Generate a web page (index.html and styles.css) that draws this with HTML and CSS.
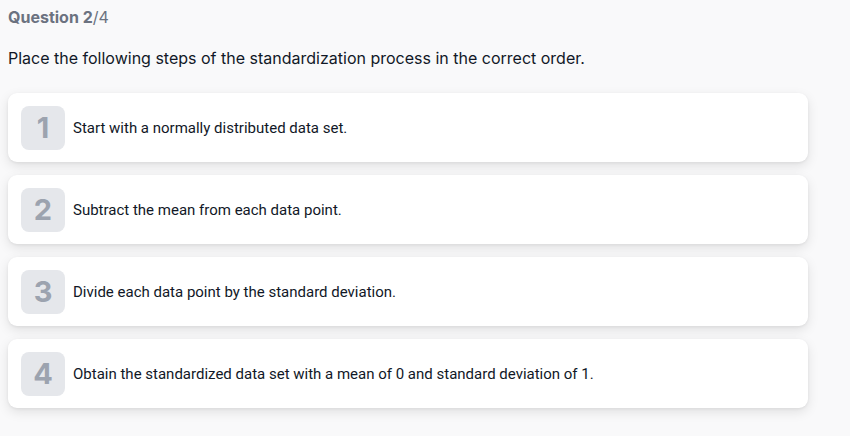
FILE: index.html
```html
<!DOCTYPE html>
<html>
<head>
<meta charset="utf-8">
<link rel="stylesheet" href="styles.css">
</head>
<body>
<div class="quiz">
  <div class="counter"><span class="cur">Question 2</span>/4</div>
  <p class="prompt">Place the following steps of the standardization process in the correct order.</p>
  <div class="list">
    <div class="card"><div class="num">1</div><div class="txt">Start with a normally distributed data set.</div></div>
    <div class="card"><div class="num">2</div><div class="txt">Subtract the mean from each data point.</div></div>
    <div class="card"><div class="num">3</div><div class="txt">Divide each data point by the standard deviation.</div></div>
    <div class="card"><div class="num">4</div><div class="txt">Obtain the standardized data set with a mean of 0 and standard deviation of 1.</div></div>
  </div>
</div>
</body>
</html>
```
FILE: styles.css
```css
html, body { margin: 0; padding: 0; }
body {
  background: #f9f9fa;
  font-family: Inter, "Noto Sans", sans-serif;
  width: 850px;
  height: 436px;
  overflow: hidden;
}
.quiz { padding: 7px 42px 0 8px; }
.counter {
  font-size: 16px;
  line-height: 20px;
  color: #6b7280;
  font-weight: 400;
}
.counter .cur { font-weight: 700; }
.prompt {
  margin: 19px 0 0 0;
  font-size: 16px;
  line-height: 24px;
  color: #111827;
}
.list {
  margin-top: 23px;
  display: flex;
  flex-direction: column;
  gap: 13px;
}
.card {
  background: #fff;
  border-radius: 9px;
  height: 69px;
  box-sizing: border-box;
  padding: 0 13px;
  display: flex;
  align-items: center;
  gap: 8px;
  box-shadow: 0 4px 12px rgba(0,0,0,0.10), 0 1px 3px rgba(0,0,0,0.06);
}
.num {
  width: 44px;
  height: 44px;
  border-radius: 8px;
  background: #e5e7eb;
  color: #9ca3af;
  font-family: Inter, sans-serif;
  font-weight: 700;
  font-size: 29px;
  display: flex;
  align-items: center;
  justify-content: center;
  flex-shrink: 0;
}
.txt {
  font-family: Roboto, sans-serif;
  font-size: 15px;
  color: #111827;
}
```
